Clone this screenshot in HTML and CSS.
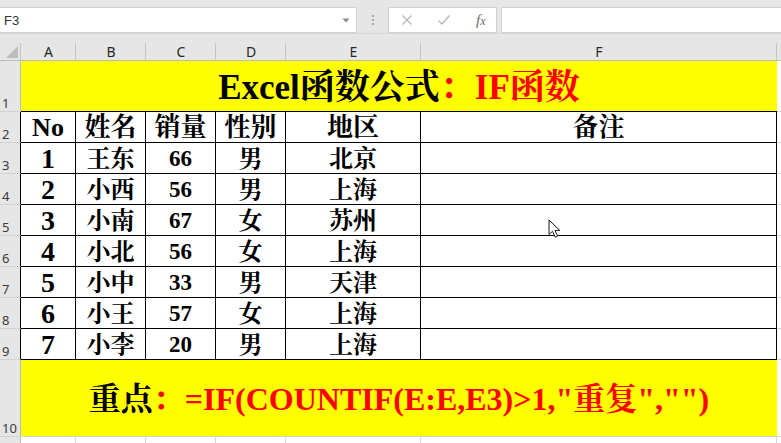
FILE: index.html
```html
<!DOCTYPE html>
<html lang="zh-CN">
<head>
<meta charset="utf-8">
<title>Excel函数公式：IF函数</title>
<link rel="stylesheet" href="styles.css">
</head>
<body>
<div class="app">
  <div class="topbar">
    <div class="namebox">
      <span class="ref">F3</span>
      <svg class="caret" width="8" height="5" viewBox="0 0 8 5"><path d="M0.5 0.5 L7.5 0.5 L4 4.5 Z" fill="#8a8a8a"/></svg>
    </div>
    <div class="grip">
      <span class="dot"></span><span class="dot"></span><span class="dot"></span>
    </div>
    <div class="fxbox">
      <svg class="btn" width="12" height="12" viewBox="0 0 12 12"><path d="M1.5 1.5 L10.5 10.5 M10.5 1.5 L1.5 10.5" stroke="#b8b8b8" stroke-width="1.3" fill="none"/></svg>
      <svg class="btn" width="14" height="12" viewBox="0 0 14 12"><path d="M1.5 6.5 L5 10 L12.5 1.5" stroke="#b8b8b8" stroke-width="1.4" fill="none"/></svg>
      <span class="fx"><i>f</i><i class="x">x</i></span>
    </div>
    <div class="formula"></div>
  </div>

  <div class="sheet">
    <!-- column headers -->
    <div class="ch corner"><svg width="14" height="14" viewBox="0 0 14 14"><path d="M13 1 L13 13 L1 13 Z" fill="#bdbdbd"/></svg></div>
    <div class="ch">A</div>
    <div class="ch">B</div>
    <div class="ch">C</div>
    <div class="ch">D</div>
    <div class="ch">E</div>
    <div class="ch">F</div>
    <div class="ch last"></div>

    <!-- row 1 -->
    <div class="rh">1</div>
    <div class="title"><span class="blk">Excel函数公式</span><span class="red">：IF函数</span></div>
    <div class="ex"></div>

    <!-- row 2 -->
    <div class="rh tb">2</div>
    <div class="c hd">No</div>
    <div class="c hd">姓名</div>
    <div class="c hd">销量</div>
    <div class="c hd">性别</div>
    <div class="c hd">地区</div>
    <div class="c hd">备注</div>
    <div class="ex"></div>

    <!-- row 3 -->
    <div class="rh tb">3</div>
    <div class="c no">1</div>
    <div class="c zh">王东</div>
    <div class="c num">66</div>
    <div class="c zh">男</div>
    <div class="c zh">北京</div>
    <div class="c"></div>
    <div class="ex"></div>

    <!-- row 4 -->
    <div class="rh tb">4</div>
    <div class="c no">2</div>
    <div class="c zh">小西</div>
    <div class="c num">56</div>
    <div class="c zh">男</div>
    <div class="c zh">上海</div>
    <div class="c"></div>
    <div class="ex"></div>

    <!-- row 5 -->
    <div class="rh tb">5</div>
    <div class="c no">3</div>
    <div class="c zh">小南</div>
    <div class="c num">67</div>
    <div class="c zh">女</div>
    <div class="c zh">苏州</div>
    <div class="c"></div>
    <div class="ex"></div>

    <!-- row 6 -->
    <div class="rh tb">6</div>
    <div class="c no">4</div>
    <div class="c zh">小北</div>
    <div class="c num">56</div>
    <div class="c zh">女</div>
    <div class="c zh">上海</div>
    <div class="c"></div>
    <div class="ex"></div>

    <!-- row 7 -->
    <div class="rh tb">7</div>
    <div class="c no">5</div>
    <div class="c zh">小中</div>
    <div class="c num">33</div>
    <div class="c zh">男</div>
    <div class="c zh">天津</div>
    <div class="c"></div>
    <div class="ex"></div>

    <!-- row 8 -->
    <div class="rh tb">8</div>
    <div class="c no">6</div>
    <div class="c zh">小王</div>
    <div class="c num">57</div>
    <div class="c zh">女</div>
    <div class="c zh">上海</div>
    <div class="c"></div>
    <div class="ex"></div>

    <!-- row 9 -->
    <div class="rh tb">9</div>
    <div class="c no">7</div>
    <div class="c zh">小李</div>
    <div class="c num">20</div>
    <div class="c zh">男</div>
    <div class="c zh">上海</div>
    <div class="c"></div>
    <div class="ex"></div>

    <!-- row 10 -->
    <div class="rh">10</div>
    <div class="note"><span class="blk">重点</span><span class="red">：=IF(COUNTIF(E:E,E3)&gt;1,"重复","")</span></div>
    <div class="ex"></div>

    <!-- row 11 -->
    <div class="rh"></div>
    <div class="g"></div>
    <div class="g"></div>
    <div class="g"></div>
    <div class="g"></div>
    <div class="g"></div>
    <div class="g"></div>
    <div class="ex"></div>
  </div>

  <svg class="cursor" width="14" height="20" viewBox="0 0 14 20">
    <path d="M1 1 L1 15.5 L4.5 12.3 L7.2 18.2 L9.6 17.1 L7 11.4 L11.8 11.4 Z" fill="#ffffff" stroke="#1a1a1a" stroke-width="1" stroke-linejoin="miter"/>
  </svg>
</div>
</body>
</html>
```

FILE: styles.css
```css
html, body {
  margin: 0;
  padding: 0;
  background: #ffffff;
}

.app {
  position: relative;
  width: 781px;
  height: 443px;
  overflow: hidden;
  font-family: "Liberation Sans", Arial, sans-serif;
}

/* ---------- formula bar ---------- */
.topbar {
  box-sizing: border-box;
  height: 34px;
  padding-top: 7px;
  background: #e6e6e6;
  border-bottom: 1px solid #d6d6d6;
  display: flex;
  align-items: stretch;
}

.namebox {
  box-sizing: border-box;
  width: 357px;
  background: #ffffff;
  border: 1px solid #d2d2d2;
  border-left: none;
  display: flex;
  align-items: center;
  justify-content: space-between;
  padding: 0 6px 0 4px;
}

.ref {
  font-size: 13px;
  color: #333333;
}

.grip {
  width: 31px;
  display: flex;
  flex-direction: column;
  align-items: center;
  justify-content: center;
  gap: 2px;
}

.dot {
  width: 2px;
  height: 2px;
  background: #a8a8a8;
}

.fxbox {
  box-sizing: border-box;
  width: 109px;
  background: #ffffff;
  border: 1px solid #d2d2d2;
  display: flex;
  align-items: center;
  padding-left: 12px;
  gap: 24px;
}

.fx {
  font-family: "Liberation Serif", serif;
  font-size: 15px;
  color: #6a6a6a;
  margin-left: 1px;
}

.fx .x {
  font-size: 12px;
}

.formula {
  box-sizing: border-box;
  flex: 1;
  margin-left: 4px;
  background: #ffffff;
  border: 1px solid #d2d2d2;
  border-right: none;
}

/* ---------- grid ---------- */
.sheet {
  display: grid;
  grid-template-columns: 21px 55px 70px 70px 70px 135px 356px 4px;
  grid-template-rows: 27px 51px repeat(8, 31px) 77px 10px;
}

.sheet > div {
  box-sizing: border-box;
}

.ch {
  background-color: #e6e6e6;
  border-bottom: 1px solid #bcbcbc;
  background-image: linear-gradient(#c4c4c4, #c4c4c4);
  background-size: 1px 17px;
  background-position: right bottom;
  background-repeat: no-repeat;
  display: flex;
  align-items: flex-end;
  justify-content: center;
  font-family: "Noto Sans", "Liberation Sans", sans-serif;
  font-size: 14px;
  line-height: 1;
  color: #262626;
  padding-bottom: 1px;
}

.ch.corner {
  justify-content: flex-end;
  align-items: flex-end;
  padding: 0 2px 1px 0;
}

.ch.last {
  background-image: none;
}

.rh {
  background: #e6e6e6;
  border-right: 1px solid #bcbcbc;
  border-bottom: 1px solid #d2d2d2;
  display: flex;
  align-items: flex-end;
  padding: 0 0 1px 2px;
  font-family: "Noto Sans", "Liberation Sans", sans-serif;
  font-size: 13px;
  line-height: 1;
  color: #3a3a3a;
}

.rh.tb {
  border-right-color: #000000;
}

.title {
  grid-column: 2 / 8;
  background: #ffff00;
  border-bottom: 1px solid #000000;
  display: flex;
  align-items: flex-end;
  justify-content: center;
  padding-bottom: 6px;
  font-family: "Liberation Serif", "Noto Serif CJK SC", "Noto Sans CJK SC", serif;
  font-weight: bold;
  font-size: 35px;
  line-height: 1;
  white-space: nowrap;
}

.note {
  grid-column: 2 / 8;
  background: #ffff00;
  border-bottom: 1px solid #d4d4d4;
  display: flex;
  align-items: center;
  justify-content: center;
  padding-top: 2px;
  font-family: "Liberation Serif", "Noto Serif CJK SC", "Noto Sans CJK SC", serif;
  font-weight: bold;
  font-size: 32px;
  line-height: 1;
  white-space: nowrap;
}

.blk {
  color: #000000;
}

.red {
  color: #ff0000;
}

.ex {
  border-bottom: 1px solid #d4d4d4;
}

.g {
  border-right: 1px solid #d4d4d4;
}

.c {
  border-right: 1px solid #000000;
  border-bottom: 1px solid #000000;
  display: flex;
  align-items: flex-end;
  justify-content: center;
  font-family: "Liberation Serif", "Noto Serif CJK SC", "Noto Sans CJK SC", serif;
  font-weight: bold;
  line-height: 1;
  color: #000000;
  white-space: nowrap;
}

.c.hd {
  font-size: 26px;
  padding-bottom: 1px;
}

.c.no {
  font-size: 28px;
}

.c.num {
  font-size: 23px;
  padding-bottom: 3px;
}

.c.zh {
  font-size: 24px;
  padding-bottom: 2px;
}

/* ---------- mouse pointer ---------- */
.cursor {
  position: absolute;
  left: 548px;
  top: 219px;
}
```
